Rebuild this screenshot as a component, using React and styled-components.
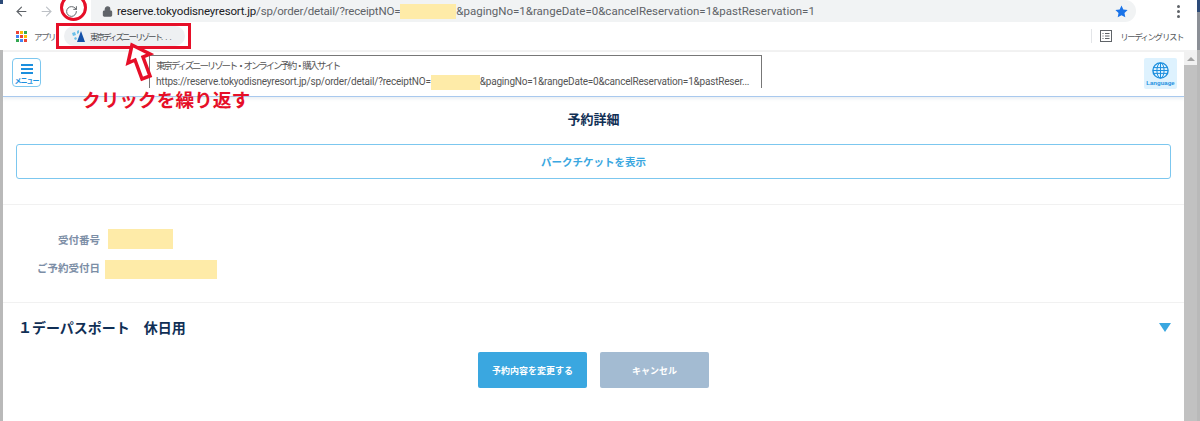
import React from "react";
import styled, { createGlobalStyle } from "styled-components";
import { ArrowLeft, ArrowRight, RotateCw, Lock } from "lucide-react";

const GlobalStyle = createGlobalStyle`
  html, body {
    margin: 0;
    padding: 0;
    background: #fff;
    overflow: hidden;
  }
  * {
    box-sizing: border-box;
  }
`;

const ui = `Roboto, "Noto Sans CJK JP", sans-serif`;
const jp = `"Noto Sans CJK JP", "Noto Sans", sans-serif`;

const Frame = styled.div`
  position: relative;
  display: flex;
  width: 1200px;
  height: 421px;
  overflow: hidden;
  background: #fff;
  font-family: ${ui};
`;

const Edge = styled.div`
  flex: none;
  width: 3px;
  background: linear-gradient(
    to bottom,
    #2c4a78 0,
    #2c4a78 ${(p) => p.$navy}px,
    ${(p) => p.$top} ${(p) => p.$navy}px,
    ${(p) => p.$top} 50px,
    #b9b9b9 50px
  );
`;

const Main = styled.div`
  flex: 1;
  min-width: 0;
  display: flex;
  flex-direction: column;
`;

const Toolbar = styled.div`
  flex: none;
  display: flex;
  align-items: center;
  height: 22px;
  padding-left: 6px;
  color: #5f6368;
`;

const NavIcon = styled.span`
  display: flex;
  width: 25px;
  justify-content: center;
  color: ${(p) => (p.$off ? "#bdc1c6" : "#5f6368")};
`;

const UrlBar = styled.div`
  display: flex;
  align-items: center;
  width: 1045px;
  height: 22px;
  margin-left: 7px;
  padding: 0 8px 0 11px;
  background: #f1f3f4;
  border-radius: 0 11px 11px 0;
`;

const Url = styled.div`
  display: flex;
  align-items: center;
  flex: 1;
  margin-left: 4px;
  font-size: 11.5px;
  color: #5f6368;
  white-space: nowrap;
`;

const UrlHead = styled.span`
  letter-spacing: -0.18px;
  b {
    font-weight: 400;
    color: #202124;
  }
`;

const Redact = styled.span`
  display: block;
  flex: none;
  width: ${(p) => p.$w}px;
  height: ${(p) => p.$h}px;
  margin-left: ${(p) => p.$ml || 0}px;
  background: #feeba8;
`;

const Dots = styled.div`
  display: flex;
  flex-direction: column;
  gap: 2px;
  margin-left: 41px;
  i {
    display: block;
    width: 3px;
    height: 3px;
    border-radius: 50%;
    background: #5f6368;
  }
`;

const Bookmarks = styled.div`
  flex: none;
  display: flex;
  align-items: center;
  height: 30px;
  padding: 0 14px 0 13px;
  border-bottom: 2px solid #f2f2f2;
  font-family: ${jp};
  font-size: 8.5px;
  letter-spacing: -1.5px;
  color: #5f6368;
`;

const AppsGrid = styled.div`
  display: grid;
  grid-template-columns: repeat(3, 3px);
  grid-auto-rows: 3px;
  gap: 1px;
  margin-right: 7px;
`;

const AppsDot = styled.i`
  display: block;
  background: ${(p) => p.$c};
`;

const Chip = styled.div`
  display: flex;
  align-items: center;
  width: 121px;
  height: 20px;
  margin-left: 9px;
  padding-left: 7px;
  gap: 5px;
  background: #eef0f2;
  border-radius: 10px;
  letter-spacing: -2px;
  color: #4a4d51;
  white-space: nowrap;
  svg {
    flex: none;
  }
`;

const Ellipsis = styled.span`
  font-family: ${ui};
  letter-spacing: 2px;
`;

const ReadingList = styled.div`
  display: flex;
  align-items: center;
  margin-left: auto;
  height: 14px;
  padding-left: 8px;
  border-left: 1px solid #e3e5e8;
  gap: 8px;
  white-space: pre;
  color: #55585c;
`;

const Body = styled.div`
  flex: 1;
  min-height: 0;
  display: flex;
`;

const Page = styled.div`
  flex: 1;
  min-width: 0;
  display: flex;
  flex-direction: column;
`;

const Scrollbar = styled.div`
  flex: none;
  width: 13px;
  display: flex;
  flex-direction: column;
  background: #f1f1f1;
`;

const ScrollUp = styled.div`
  flex: none;
  height: 13px;
  display: flex;
  align-items: center;
  justify-content: center;
  &::before {
    content: "";
    border-left: 4px solid transparent;
    border-right: 4px solid transparent;
    border-bottom: 4px solid #a3a3a3;
  }
`;

const ScrollThumb = styled.div`
  flex: 1;
  background: #c1c1c1;
`;

const Header = styled.header`
  flex: none;
  display: flex;
  align-items: flex-start;
  justify-content: space-between;
  height: 45px;
  padding: 6px 7px 0 9px;
  border-bottom: 1px solid #a9c9ee;
  box-shadow: 0 2px 3px rgba(150, 170, 190, 0.18);
`;

const MenuButton = styled.div`
  display: flex;
  flex-direction: column;
  align-items: center;
  width: 29px;
  height: 29px;
  padding-top: 5px;
  border: 1px solid #7cc7ef;
  border-radius: 4px;
  color: #1c8fde;
  font-family: ${jp};
  font-size: 7px;
  font-weight: 700;
  letter-spacing: -1px;
  line-height: 8px;
  white-space: nowrap;
`;

const Burger = styled.span`
  display: block;
  flex: none;
  width: 12px;
  height: 10px;
  margin-bottom: 2px;
  border-top: 2px solid #1c8fde;
  border-bottom: 2px solid #1c8fde;
  position: relative;
  &::after {
    content: "";
    position: absolute;
    left: 0;
    right: 0;
    top: 2px;
    height: 2px;
    background: #1c8fde;
  }
`;

const LangButton = styled.div`
  display: flex;
  flex-direction: column;
  align-items: center;
  width: 33px;
  height: 31px;
  padding-top: 4px;
  background: #def2fe;
  border-radius: 2px;
  color: #1c8fde;
  font-family: "Liberation Sans", sans-serif;
  font-size: 6px;
  font-weight: 700;
  line-height: 7px;
  gap: 1px;
  white-space: nowrap;
`;

const Title = styled.h1`
  margin: 13px 0 0;
  height: 18px;
  font-family: ${jp};
  font-size: 13px;
  font-weight: 700;
  line-height: 18px;
  text-align: center;
  color: #102f55;
`;

const TicketButton = styled.div`
  display: flex;
  align-items: center;
  justify-content: center;
  height: 35px;
  margin: 16px 13px 0;
  border: 1px solid #7cc7ef;
  border-radius: 3px;
  font-family: ${jp};
  font-size: 10.5px;
  font-weight: 700;
  color: #3aa7e0;
`;

const Section = styled.section`
  margin-top: ${(p) => p.$mt}px;
  height: ${(p) => p.$h}px;
  border-top: 1px solid #f1f1f1;
`;

const InfoRows = styled.div`
  display: flex;
  flex-direction: column;
  padding-top: 24px;
  gap: 11px;
`;

const InfoRow = styled.div`
  display: flex;
  align-items: center;
  height: ${(p) => p.$h}px;
`;

const InfoLabel = styled.div`
  width: 97px;
  padding-bottom: ${(p) => p.$lift || 0}px;
  text-align: right;
  font-family: ${jp};
  font-size: 10.5px;
  font-weight: 700;
  color: #7c8ea6;
`;

const PlanHead = styled.div`
  display: flex;
  align-items: center;
  justify-content: space-between;
  height: 48px;
  padding: 0 13px 0 15px;
`;

const PlanName = styled.h2`
  margin: 0;
  font-family: ${jp};
  font-size: 14px;
  font-weight: 700;
  white-space: pre;
  color: #102f55;
`;

const Caret = styled.span`
  display: block;
  border-left: 6px solid transparent;
  border-right: 6px solid transparent;
  border-top: 9px solid #3aa7e0;
`;

const Actions = styled.div`
  display: flex;
  justify-content: center;
  gap: 13px;
`;

const ActionButton = styled.div`
  display: flex;
  align-items: center;
  justify-content: center;
  width: 109px;
  height: 36px;
  border-radius: 2px;
  background: ${(p) => (p.$muted ? "#a3bbd2" : "#3aa7e0")};
  font-family: ${jp};
  font-size: 9px;
  font-weight: 700;
  color: #fff;
`;

const Tooltip = styled.div`
  position: absolute;
  left: 149px;
  top: 55px;
  width: 613px;
  height: 33px;
  padding: 1px 6px 0;
  background: #fff;
  border: 1px solid #777;
  border-bottom: none;
  font-size: 10px;
  letter-spacing: -0.2px;
  line-height: 16px;
  color: #555;
  white-space: nowrap;
`;

const TooltipLine = styled.div`
  display: flex;
  align-items: center;
  height: 16px;
`;

const TooltipName = styled(TooltipLine)`
  margin-bottom: 1px;
  font-family: ${jp};
  font-size: 9.5px;
  letter-spacing: -2.15px;
`;

const RedRing = styled.div`
  position: absolute;
  left: 60px;
  top: -6px;
  width: 27px;
  height: 27px;
  border: 3.5px solid #e60f28;
  border-radius: 50%;
`;

const RedBox = styled.div`
  position: absolute;
  left: 56px;
  top: 23px;
  width: 135px;
  height: 26px;
  border: 3px solid #e60f28;
`;

const Callout = styled.div`
  position: absolute;
  left: 82px;
  top: 84px;
  font-family: ${jp};
  font-size: 18.7px;
  font-weight: 700;
  line-height: 30px;
  white-space: nowrap;
  color: #e60f28;
`;

const CalloutArrow = styled.svg`
  position: absolute;
  left: 122px;
  top: 40px;
`;

const appColors = [
  "#ea4335", "#fbbc04", "#34a853",
  "#4285f4", "#ea4335", "#fbbc04",
  "#34a853", "#4285f4", "#ea4335",
];

function App() {
  return (
    <Frame>
      <GlobalStyle />
      <Edge $navy={4} $top="#fff" />
      <Main>
        <Toolbar>
          <NavIcon>
            <ArrowLeft size={15} strokeWidth={1.8} />
          </NavIcon>
          <NavIcon $off>
            <ArrowRight size={15} strokeWidth={1.8} />
          </NavIcon>
          <NavIcon>
            <RotateCw size={13} strokeWidth={1.8} />
          </NavIcon>
          <UrlBar>
            <Lock size={11} strokeWidth={2.4} fill="#5f6368" />
            <Url>
              <UrlHead>
                <b>reserve.tokyodisneyresort.jp</b>/sp/order/detail/?receiptNO=
              </UrlHead>
              <Redact $w={56} $h={15} />
              &amp;pagingNo=1&amp;rangeDate=0&amp;cancelReservation=1&amp;pastReservation=1
            </Url>
            <svg width="13" height="13" viewBox="0 0 24 24">
              <path
                d="M12 1l3.4 7.3 7.9 1-5.8 5.5 1.5 7.9L12 18.8l-7 3.9 1.5-7.9L.7 9.3l7.9-1z"
                fill="#1a73e8"
              />
            </svg>
          </UrlBar>
          <Dots>
            <i />
            <i />
            <i />
          </Dots>
        </Toolbar>
        <Bookmarks>
          <AppsGrid>
            {appColors.map((c, i) => (
              <AppsDot key={i} $c={c} />
            ))}
          </AppsGrid>
          アプリ
          <Chip>
            <svg width="14" height="12" viewBox="0 0 14 12">
              <path d="M1 3l3-1 1 3-3 1zM6 1l2-1 0 3-2 1zM3 8l2-1 1 2-2 1z" fill="#6cbfe8" />
              <path d="M10 1l4 11H6z" fill="#1450a8" />
            </svg>
            <span>
              東京ディズニーリゾート<Ellipsis>...</Ellipsis>
            </span>
          </Chip>
          <ReadingList>
            <svg width="12" height="12" viewBox="0 0 12 12" fill="none" stroke="#5f6368">
              <rect x="0.5" y="0.5" width="11" height="11" />
              <path d="M2.5 3.5h1M5 3.5h4.5M2.5 6h1M5 6h4.5M2.5 8.5h1M5 8.5h4.5" />
            </svg>
            リーディング リスト
          </ReadingList>
        </Bookmarks>
        <Body>
          <Page>
            <Header>
              <MenuButton>
                <Burger />
                メニュー
              </MenuButton>
              <LangButton>
                <svg width="17" height="17" viewBox="0 0 17 17" fill="none" stroke="#1c8fde">
                  <circle cx="8.5" cy="8.5" r="7.6" strokeWidth="1.4" />
                  <ellipse cx="8.5" cy="8.5" rx="3.6" ry="7.6" />
                  <path d="M8.5 1v15M1.4 5.6h14.2M1 8.5h15M1.4 11.4h14.2" />
                </svg>
                Language
              </LangButton>
            </Header>
            <Title>予約詳細</Title>
            <TicketButton>パークチケットを表示</TicketButton>
            <Section $mt={25} $h={98}>
              <InfoRows>
                <InfoRow $h={20}>
                  <InfoLabel>受付番号</InfoLabel>
                  <Redact $ml={8} $w={65} $h={20} />
                </InfoRow>
                <InfoRow $h={19}>
                  <InfoLabel $lift={4}>ご予約受付日</InfoLabel>
                  <Redact $ml={5} $w={112} $h={19} />
                </InfoRow>
              </InfoRows>
            </Section>
            <Section $mt={0} $h={50}>
              <PlanHead>
                <PlanName>１デーパスポート　休日用</PlanName>
                <Caret />
              </PlanHead>
            </Section>
            <Actions>
              <ActionButton>予約内容を変更する</ActionButton>
              <ActionButton $muted>キャンセル</ActionButton>
            </Actions>
          </Page>
          <Scrollbar>
            <ScrollUp />
            <ScrollThumb />
          </Scrollbar>
        </Body>
      </Main>
      <Edge $navy={12} $top="#8b8f96" />

      <Tooltip>
        <TooltipName>東京ディズニーリゾート・オンライン予約・購入サイト</TooltipName>
        <TooltipLine>
          https://reserve.tokyodisneyresort.jp/sp/order/detail/?receiptNO=
          <Redact $w={49} $h={15} />
          &amp;pagingNo=1&amp;rangeDate=0&amp;cancelReservation=1&amp;pastReser...
        </TooltipLine>
      </Tooltip>
      <RedRing />
      <RedBox />
      <CalloutArrow width="32" height="44" viewBox="0 0 32 44">
        <path
          d="M10 5L6 23l7-3 7 19 8-3-7-19 7-3z"
          fill="#fff"
          stroke="#e60f28"
          strokeWidth="3.5"
        />
      </CalloutArrow>
      <Callout>クリックを繰り返す</Callout>
    </Frame>
  );
}

export default App;
